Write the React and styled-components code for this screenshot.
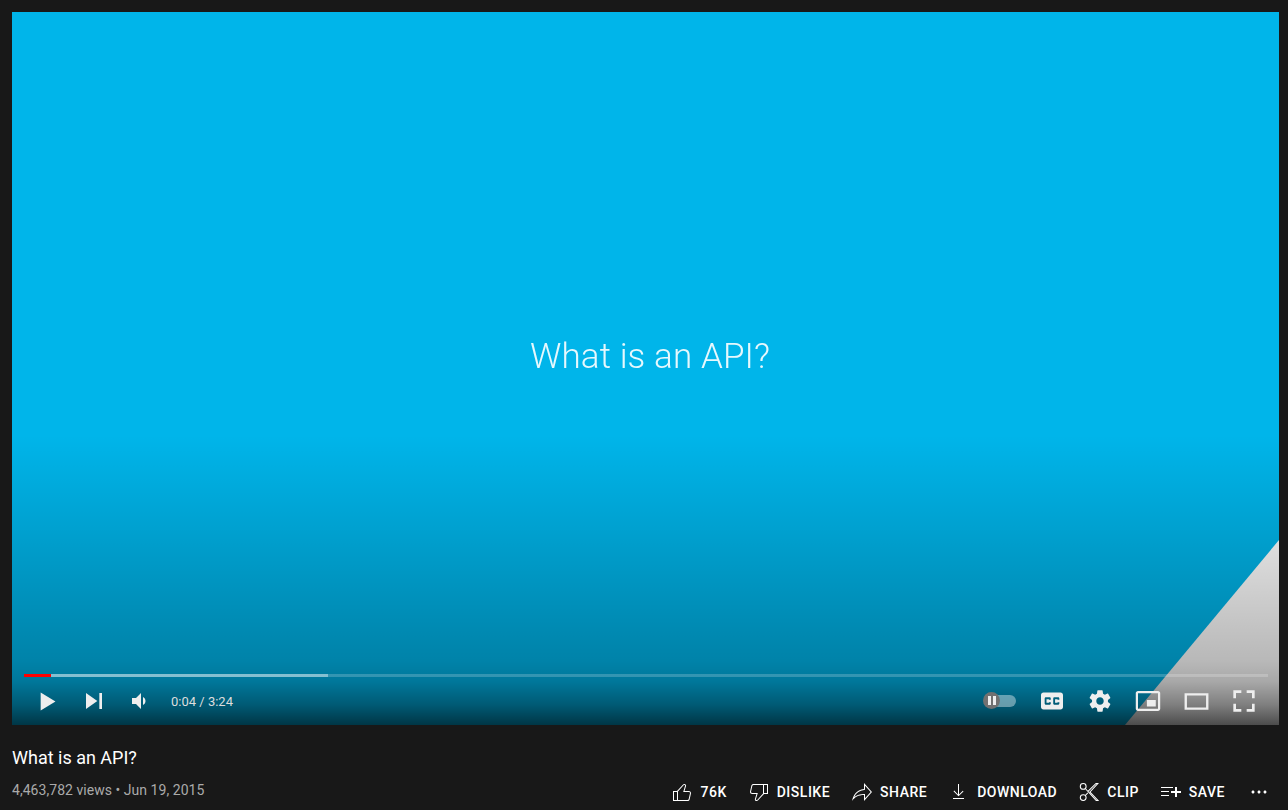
import styled, { createGlobalStyle } from "styled-components";

const GlobalStyle = createGlobalStyle`
  html, body {
    margin: 0;
    height: 810px;
    overflow: hidden;
    background: #181818;
    font-family: Roboto, "Liberation Sans", sans-serif;
  }
`;

const Page = styled.main`
  width: 1288px;
  height: 810px;
  box-sizing: border-box;
  padding: 12px 9px 0 12px;
  overflow: hidden;
`;

const Player = styled.section`
  position: relative;
  height: 713px;
  background: #00b5ea;
  display: flex;
  align-items: center;
  justify-content: center;
  overflow: hidden;
`;

const VideoTitle = styled.h2`
  margin: 0 0 24px 9px;
  color: rgba(255, 255, 255, 0.9);
  font-weight: 300;
  font-size: 35px;
  letter-spacing: 0.1px;
  filter: blur(0.3px);
`;

const Corner = styled.div`
  position: absolute;
  right: 0;
  bottom: 0;
  width: 154px;
  height: 185px;
  background: #fff;
  clip-path: polygon(100% 0, 100% 100%, 0 100%);
`;

const Shade = styled.div`
  position: absolute;
  left: 0;
  right: 0;
  bottom: 0;
  height: 290px;
  background: linear-gradient(
    to bottom,
    rgba(0, 0, 0, 0) 0%,
    rgba(0, 0, 0, 0.12) 35%,
    rgba(0, 0, 0, 0.28) 78%,
    rgba(0, 0, 0, 0.34) 85%,
    rgba(0, 0, 0, 0.5) 93%,
    rgba(0, 0, 0, 0.7) 100%
  );
`;

const Chrome = styled.div`
  position: absolute;
  left: 12px;
  right: 11px;
  bottom: 0;
`;

const Progress = styled.div`
  position: relative;
  height: 3px;
  background: rgba(255, 255, 255, 0.2);
`;

const Buffered = styled.div`
  position: absolute;
  left: 0;
  top: 0;
  bottom: 0;
  background: rgba(255, 255, 255, 0.4);
`;

const Played = styled(Buffered)`
  background: #f00;
`;

const ControlBar = styled.div`
  height: 48px;
  display: flex;
  align-items: center;
  color: #eee;
`;

const ControlButton = styled.div`
  width: ${({ $w }) => $w || 48}px;
  height: 48px;
  flex: none;
  display: flex;
  align-items: center;
  justify-content: center;
`;

const TimeText = styled.span`
  margin-left: 5px;
  font-size: 13px;
  color: #ddd;
`;

const Spacer = styled.div`
  flex: 1;
`;

const Toggle = styled.div`
  position: relative;
  width: 33px;
  height: 12px;
  margin-right: 12px;
`;

const ToggleTrack = styled.div`
  position: absolute;
  left: 5px;
  right: 0;
  top: 0;
  bottom: 0;
  border-radius: 6px;
  background: rgba(255, 255, 255, 0.4);
`;

const ToggleKnob = styled.div`
  position: absolute;
  left: 0;
  top: -3px;
  width: 17px;
  height: 17px;
  border-radius: 50%;
  background: #717171;
  display: flex;
  align-items: center;
  justify-content: center;
  gap: 2px;
`;

const PauseBar = styled.i`
  width: 3px;
  height: 9px;
  background: #eee;
`;

const Info = styled.section`
  display: flex;
  flex-direction: column;
`;

const Title = styled.h1`
  margin: 22px 0 0;
  font-size: 18px;
  font-weight: 400;
  line-height: 22px;
  color: #fff;
`;

const MetaRow = styled.div`
  display: flex;
  justify-content: space-between;
  align-items: center;
  margin-top: 5px;
  height: 36px;
`;

const Meta = styled.span`
  font-size: 14px;
  color: #aaa;
  margin-top: -5px;
  letter-spacing: 0.04px;
`;

const Actions = styled.div`
  display: flex;
  align-items: center;
  gap: 20px;
  margin-right: 8px;
`;

const Action = styled.button`
  display: flex;
  align-items: center;
  gap: 6px;
  padding: 0;
  border: 0;
  background: none;
  color: #fff;
  font: 500 14px Roboto, sans-serif;
  letter-spacing: 0.5px;
  text-transform: uppercase;
  svg {
    display: block;
    flex: none;
  }
`;

const MoreAction = styled(Action)`
  margin-left: 2px;
`;

const Icon = ({ d, size = 24, box = 24, evenOdd }) => (
  <svg width={size} height={size} viewBox={`0 0 ${box} ${box}`} fill="currentColor">
    <path d={d} fillRule={evenOdd ? "evenodd" : undefined} />
  </svg>
);

const playerIcons = {
  play: "M12 26 18.5 22V14L12 10ZM18.5 22 25 18 18.5 14Z",
  next: "M12 24 20.5 18 12 12ZM22 12V24H24V12Z",
  volume: "M8 21H12L17 26V10L12 15H8ZM19 14V22C20.48 21.32 21.5 19.77 21.5 18 21.5 16.26 20.48 14.74 19 14Z",
  cc: "M11 11C9.89 11 9 11.9 9 13V23C9 24.1 9.89 25 11 25H25C26.1 25 27 24.1 27 23V13C27 11.9 26.1 11 25 11ZM17 17H15.5V16.5H13.5V19.5H15.5V19H17V20C17 20.55 16.55 21 16 21H13C12.45 21 12 20.55 12 20V16C12 15.45 12.45 15 13 15H16C16.55 15 17 15.45 17 16ZM24 17H22.5V16.5H20.5V19.5H22.5V19H24V20C24 20.55 23.55 21 23 21H20C19.45 21 19 20.55 19 20V16C19 15.45 19.45 15 20 15H23C23.55 15 24 15.45 24 16Z",
  settings: "m23.94 18.78c.03-.25.05-.51.05-.78 0-.27-.02-.52-.05-.78l1.68-1.32c.15-.12.19-.33.09-.51l-1.6-2.76c-.09-.17-.31-.24-.48-.17l-1.99.8c-.41-.32-.86-.58-1.35-.78l-.3-2.12c-.02-.19-.19-.33-.39-.33h-3.2c-.2 0-.36.14-.39.33l-.3 2.12c-.48.2-.93.47-1.35.78l-1.99-.8c-.18-.07-.39 0-.48.17l-1.6 2.76c-.1.17-.05.39.09.51l1.68 1.32c-.03.25-.05.52-.05.78 0 .26.02.52.05.78l-1.68 1.32c-.15.12-.19.33-.09.51l1.6 2.76c.09.17.31.24.48.17l1.99-.8c.41.32.86.58 1.35.78l.3 2.12c.02.19.19.33.39.33h3.2c.2 0 .36-.14.39-.33l.3-2.12c.48-.2.93-.47 1.35-.78l1.99.8c.18.07.39 0 .48-.17l1.6-2.76c.09-.17.05-.39-.09-.51zm-5.94 2.01c-1.54 0-2.8-1.25-2.8-2.8 0-1.54 1.25-2.8 2.8-2.8 1.54 0 2.8 1.25 2.8 2.8 0 1.54-1.25 2.8-2.8 2.8z",
  mini: "M25 17H17V23H25ZM29 25V10.98C29 9.88 28.1 9 27 9H9C7.9 9 7 9.88 7 10.98V25C7 26.1 7.9 27 9 27H27C28.1 27 29 26.1 29 25ZM27 25.02H9V10.97H27Z",
  theater: "M28 11V25H8V11ZM10 13V23H26V13Z",
  full: "M10 16H12V12H16V10H10ZM20 10V12H24V16H26V10ZM24 24H20V26H26V20H24ZM12 20H10V26H16V24H12Z",
};

const actionIcons = {
  like: "M18.77 11h-4.23l1.52-4.94C16.38 5.03 15.54 4 14.38 4c-.58 0-1.14.24-1.52.65L7 11H3v10h14.43c1.06 0 1.98-.67 2.19-1.61l1.34-6C21.23 12.15 20.18 11 18.77 11zM7 20H4v-8h3zm12.98-6.83-1.34 6c-.1.48-.61.83-1.21.83H8v-8.61l5.6-6.06c.19-.21.48-.33.78-.33.26 0 .5.11.63.3.07.1.15.26.09.47l-1.52 4.94-.4 1.29h5.58c.41 0 .8.17 1.03.46.12.15.25.4.19.71z",
  dislike: "M17 4H6.57C5.5 4 4.59 4.67 4.38 5.61l-1.34 6C2.77 12.85 3.82 14 5.23 14h4.23l-1.52 4.94C7.62 19.97 8.46 21 9.62 21c.58 0 1.14-.24 1.52-.65L17 14h4V4zm-6.6 15.67c-.19.21-.48.33-.78.33-.26 0-.5-.11-.63-.3-.07-.1-.15-.26-.09-.47l1.52-4.94.4-1.29H5.23c-.41 0-.8-.17-1.03-.46-.12-.15-.25-.4-.18-.72l1.34-6C5.46 5.35 5.97 5 6.57 5H16v8.61zM20 13h-3V5h3z",
  share: "M15 5.63 20.66 12 15 18.37V14h-1c-3.96 0-7.14 1-9.75 3.09 1.84-4.07 5.11-6.4 9.89-7.1L15 9.86V5.63M14 3v6C6.22 10.13 3.11 15.33 2 21c2.78-3.97 6.44-6 12-6v6l8-9z",
  download: "M17 18v1H6v-1zm-.5-6.6-.7-.7-3.8 3.7V4h-1v10.4l-3.8-3.8-.7.7 5 5z",
  save: "M22 13h-4v4h-2v-4h-4v-2h4V7h2v4h4zM14 7H2v1h12zM2 12h8v-1H2zm0 4h8v-1H2z",
  more: "M7.5 12c0 .83-.67 1.5-1.5 1.5S4.5 12.83 4.5 12s.67-1.5 1.5-1.5 1.5.67 1.5 1.5zM12 10.5c-.83 0-1.5.67-1.5 1.5s.67 1.5 1.5 1.5 1.5-.67 1.5-1.5-.67-1.5-1.5-1.5zm6 0c-.83 0-1.5.67-1.5 1.5s.67 1.5 1.5 1.5 1.5-.67 1.5-1.5-.67-1.5-1.5-1.5z",
};

const ScissorsIcon = () => (
  <svg width="24" height="24" viewBox="0 0 24 24" fill="none" stroke="currentColor" strokeWidth="1.05">
    <circle cx="6.2" cy="6.4" r="2.9" />
    <circle cx="6.2" cy="17.6" r="2.9" />
    <path d="M8.3 8.5 19.2 20.5H21L13 12 20.8 3.5H19L11.2 11.2M8.3 15.5 10.8 12.9" />
  </svg>
);

const actions = [
  { label: "76K", d: actionIcons.like },
  { label: "Dislike", d: actionIcons.dislike },
  { label: "Share", d: actionIcons.share },
  { label: "Download", d: actionIcons.download },
  { label: "Clip", scissors: true },
  { label: "Save", d: actionIcons.save },
];

export default function App() {
  return (
    <>
      <GlobalStyle />
      <Page>
        <Player>
          <VideoTitle>What is an API?</VideoTitle>
          <Corner />
          <Shade />
          <Chrome>
            <Progress>
              <Buffered style={{ width: "24.4%" }} />
              <Played style={{ width: "2.2%" }} />
            </Progress>
            <ControlBar>
              <ControlButton $w={46}>
                <Icon d={playerIcons.play} size={41} box={36} />
              </ControlButton>
              <ControlButton>
                <Icon d={playerIcons.next} size={48} box={36} />
              </ControlButton>
              <ControlButton>
                <Icon d={playerIcons.volume} size={36} box={36} />
              </ControlButton>
              <TimeText>0:04 / 3:24</TimeText>
              <Spacer />
              <Toggle>
                <ToggleTrack />
                <ToggleKnob>
                  <PauseBar />
                  <PauseBar />
                </ToggleKnob>
              </Toggle>
              <ControlButton>
                <Icon d={playerIcons.cc} size={44} box={36} evenOdd />
              </ControlButton>
              <ControlButton>
                <Icon d={playerIcons.settings} size={48} box={36} />
              </ControlButton>
              <ControlButton>
                <Icon d={playerIcons.mini} size={40} box={36} evenOdd />
              </ControlButton>
              <ControlButton>
                <Icon d={playerIcons.theater} size={43} box={36} evenOdd />
              </ControlButton>
              <ControlButton>
                <Icon d={playerIcons.full} size={48} box={36} />
              </ControlButton>
            </ControlBar>
          </Chrome>
        </Player>
        <Info>
          <Title>What is an API?</Title>
          <MetaRow>
            <Meta>4,463,782 views • Jun 19, 2015</Meta>
            <Actions>
              {actions.map((a) => (
                <Action key={a.label}>
                  {a.scissors ? <ScissorsIcon /> : <Icon d={a.d} />}
                  {a.label}
                </Action>
              ))}
              <MoreAction>
                <Icon d={actionIcons.more} />
              </MoreAction>
            </Actions>
          </MetaRow>
        </Info>
      </Page>
    </>
  );
}
